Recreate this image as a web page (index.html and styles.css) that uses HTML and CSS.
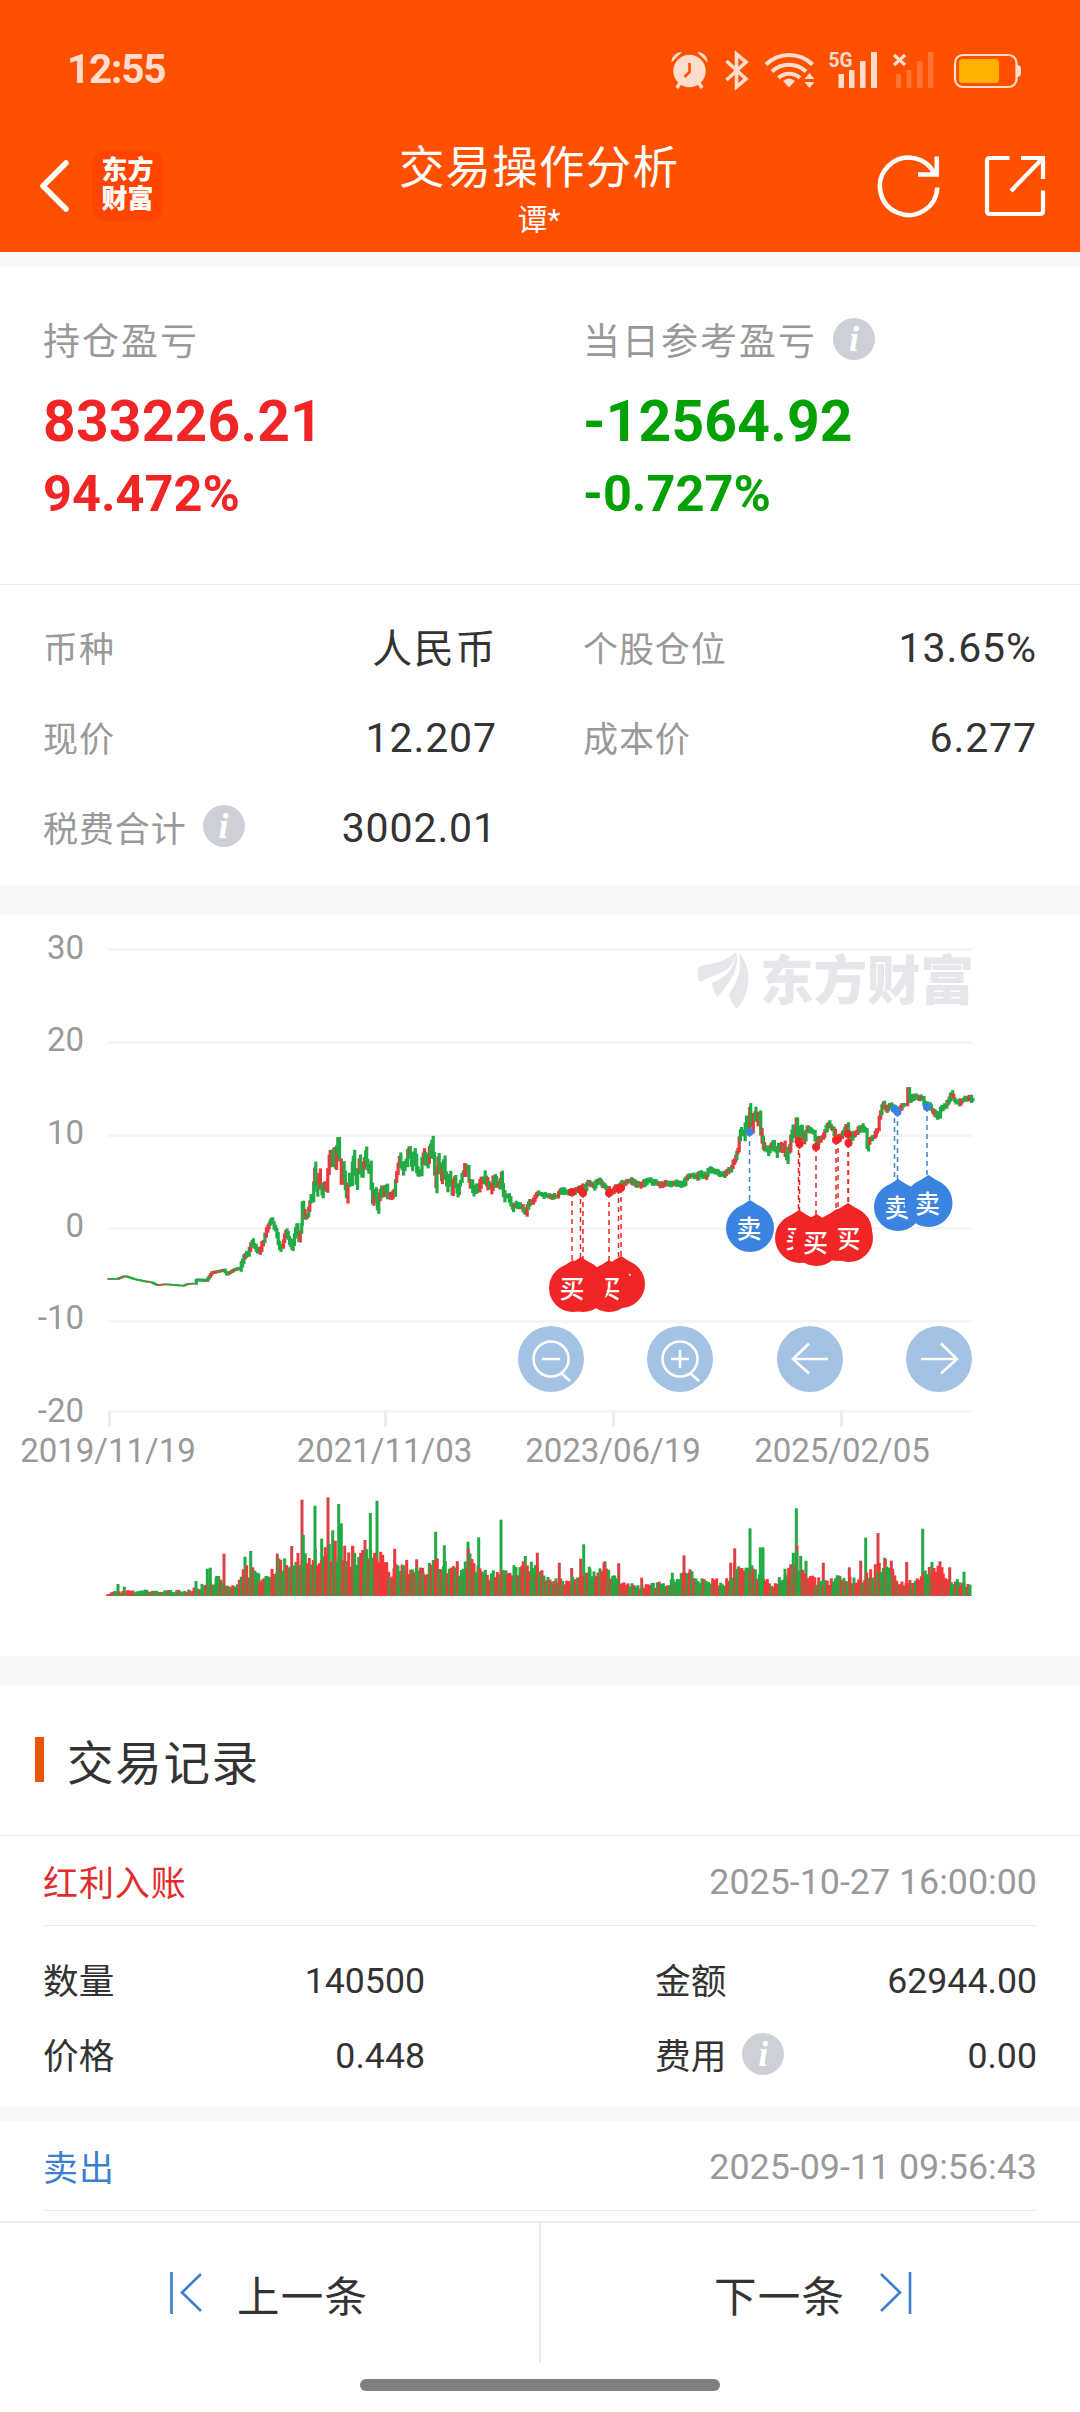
FILE: index.html
```html
<!DOCTYPE html>
<html lang="zh-CN">
<head>
    <meta charset="UTF-8">
    <meta name="viewport" content="width=device-width, initial-scale=1.0">
    <title>交易操作分析</title>
    <link rel="stylesheet" href="styles.css">
</head>
<body>
    <header class="header">
        <div class="status-bar">
            <span class="time">12:55</span>
            <svg class="status-icons" width="354" height="52" viewBox="669 44 354 52" fill="#ffdccc">
                <!-- alarm -->
                <circle cx="689.5" cy="71" r="16.2"/>
                <path d="M671.5 62.500 A10 10 0 0 1 682 52 Z M707.500 62.500 A10 10 0 0 0 697 52 Z"/>
                <path d="M680 83l-3 5M699 83l3 5" stroke="#ffdccc" stroke-width="3.500"/>
                <path d="M689.500 63v9l-5 5" fill="none" stroke="#ff5000" stroke-width="2.600"/>
                <!-- bluetooth -->
                <path d="M726.500 61L746 79l-9.500 8V54l9.500 8-19.500 18" fill="none" stroke="#ffdccc" stroke-width="3.600"/>
                <!-- wifi -->
                <g fill="none" stroke="#ffdccc" stroke-width="4">
                    <path d="M766 64.500a33 33 0 0 1 46.500 0"/>
                    <path d="M772 71.500a24.500 24.500 0 0 1 34 0"/>
                    <path d="M778.500 78a15.500 15.500 0 0 1 21.500 0"/>
                </g>
                <path d="M783 81q6-5 12 0l-6 6.500zM804.500 79l5-6 5 6zM804.500 82l5 6 5-6z"/>
                <!-- signal -->
                <text class="net" x="828.500" y="67" textLength="24" lengthAdjust="spacingAndGlyphs">5G</text>
                <path d="M838.500 74h5.500v14h-5.500zM849 70h5.500v18h-5.500zM860 61h5.500v27h-5.500zM871 52h6v36h-6z"/>
                <path d="M894 55l11 10M905 55l-11 10" stroke="#ffdccc" stroke-width="3.200"/>
                <path d="M896 74h5v14h-5zM906.500 70h5v18h-5zM917 61h5.500v27h-5.500zM928 52h5.500v36h-5.500z" fill="#ff7333"/>
                <!-- battery -->
                <rect x="955" y="55" width="61.500" height="32" rx="8" fill="none" stroke="#ffdccc" stroke-width="2.200"/>
                <rect x="959" y="59" width="40" height="24" rx="3.500" fill="#ffb000"/>
                <path d="M1017 65h1q3 1 3 3v6q0 2-3 3h-1z"/>
            </svg>
        </div>
        <div class="nav-bar">
            <div class="nav-side">
                <svg width="32" height="56" viewBox="38 159 32 56" fill="none" stroke="#fff" stroke-width="5.500" stroke-linecap="round" stroke-linejoin="round">
                    <path d="M66 164L43 187l23 23"/>
                </svg>
                <div class="logo">东方<br>财富</div>
            </div>
            <div class="nav-title">
                <div class="title">交易操作分析</div>
                <div class="subtitle">谭*</div>
            </div>
            <div class="nav-side nav-right">
                <svg width="66" height="66" viewBox="876 153 66 66" fill="none" stroke="#fff" stroke-width="4.500">
                    <path d="M937.300 187.500A28.700 28.700 0 1 1 935 175"/>
                    <path d="M936.800 156.500V174.500H918"/>
                </svg>
                <svg width="66" height="66" viewBox="982 153 66 66" fill="none" stroke="#fff" stroke-width="4.200">
                    <path d="M1009.500 158H990q-3 0-3 3v50q0 3 3 3h50q3 0 3-3v-20.500M1021 158h22v21M1043 158l-32 33"/>
                </svg>
            </div>
        </div>
    </header>

    <section class="summary">
        <div class="profit">
            <div class="profit-item red">
                <div class="profit-label">持仓盈亏</div>
                <div class="amount">833226.21</div>
                <div class="percent">94.472%</div>
            </div>
            <div class="profit-item green">
                <div class="profit-label">当日参考盈亏<span class="info">i</span></div>
                <div class="amount">-12564.92</div>
                <div class="percent">-0.727%</div>
            </div>
        </div>
        <div class="details">
            <div class="detail"><span>币种</span><b class="cn">人民币</b></div>
            <div class="detail"><span>个股仓位</span><b>13.65%</b></div>
            <div class="detail"><span>现价</span><b>12.207</b></div>
            <div class="detail"><span>成本价</span><b>6.277</b></div>
            <div class="detail"><span>税费合计<i class="info">i</i></span><b>3002.01</b></div>
        </div>
    </section>

    <section class="chart">
        <svg id="chart" width="1080" height="741" viewBox="0 915 1080 741">
            <g stroke="#f5f5f5" stroke-width="3">
                <path d="M108 949.500H972M108 1042.500H972M108 1135.500H972M108 1228.500H972M108 1321.500H972M108 1411.500H972"/>
                <path d="M109.500 1412v15M385.500 1412v15M613.500 1412v15M841.500 1412v15" stroke="#ececec"/>
            </g>
            <g class="axis" text-anchor="end">
                <text x="84" y="959">30</text>
                <text x="84" y="1051">20</text>
                <text x="84" y="1144">10</text>
                <text x="84" y="1237">0</text>
                <text x="84" y="1329">-10</text>
                <text x="84" y="1422">-20</text>
            </g>
            <g class="axis" text-anchor="middle">
                <text x="108" y="1462">2019/11/19</text>
                <text x="384.500" y="1462">2021/11/03</text>
                <text x="613" y="1462">2023/06/19</text>
                <text x="842" y="1462">2025/02/05</text>
            </g>
            <!-- watermark -->
            <g fill="#e6e6eb">
                <path d="M698 970q0-4 6-5c14-2 24-6 31-12-1 15-12 20-22 23-7 2-9 5-14 6q-2-6-1-12z"/>
                <path d="M712 983c13-5 23-13 23-30h1.500c3 17-7 30-19 44q-4-5-5.500-14z"/>
                <path d="M729 994c10-14 13-26 10-41 13 14 13 38-2 56q-7-7-8-15z"/>
                <text class="watermark" x="760" y="1000" textLength="214" lengthAdjust="spacingAndGlyphs">东方财富</text>
            </g>
            <g id="price"></g>
            <g id="volume"></g>
            <g id="marks"></g>
            <!-- chart controls -->
            <g fill="#a4c2e4">
                <circle cx="551" cy="1359" r="33"/>
                <circle cx="680" cy="1359" r="33"/>
                <circle cx="810" cy="1359" r="33"/>
                <circle cx="939" cy="1359" r="33"/>
            </g>
            <g fill="none" stroke="#fff" stroke-width="2.600">
                <circle cx="551" cy="1359" r="17.500"/>
                <path d="M542 1359h18M561 1373l9 8"/>
                <circle cx="680" cy="1359" r="17.500"/>
                <path d="M671 1359h18M680 1350v18M690 1373l9 8"/>
                <path d="M828 1359h-35M809 1343.500l-16 15.500 16 14.500"/>
                <path d="M921 1359h35M941 1343.500l16 15.500-16 14.500"/>
            </g>
        </svg>
    </section>

    <section class="records">
        <h2 class="section-title">交易记录</h2>
        <div class="record">
            <div class="record-head"><span class="red">红利入账</span><time>2025-10-27 16:00:00</time></div>
            <div class="record-body">
                <div class="cell"><span>数量</span><span>140500</span></div>
                <div class="cell"><span>金额</span><span>62944.00</span></div>
                <div class="cell"><span>价格</span><span>0.448</span></div>
                <div class="cell"><span>费用<i class="info">i</i></span><span>0.00</span></div>
            </div>
        </div>
        <div class="record">
            <div class="record-head"><span class="blue">卖出</span><time>2025-09-11 09:56:43</time></div>
            <div class="record-body"></div>
        </div>
    </section>

    <footer class="footer">
        <div class="pager">
            <div class="page-btn prev">
                <svg width="32" height="42" viewBox="0 0 32 42" fill="none" stroke="#3c7fd0" stroke-width="2.600"><path d="M1.500 0v42M31 2L12 20.500 31 39"/></svg>
                上一条
            </div>
            <div class="page-btn next">
                下一条
                <svg width="32" height="42" viewBox="0 0 32 42" fill="none" stroke="#3c7fd0" stroke-width="2.600"><path d="M30 0v42M1 2l19 18.500L1 39"/></svg>
            </div>
        </div>
        <div class="home-bar"></div>
    </footer>
    <script src="chart.js"></script>
</body>
</html>
```
FILE: styles.css
```css
* {
    box-sizing: border-box;
}

body {
    margin: 0;
    height: 2412px;
    overflow: hidden;
    display: flex;
    flex-direction: column;
    background: #f8f8f8;
    color: #333;
    font-family: Roboto, "Noto Sans CJK SC", sans-serif;
    font-size: 36px;
}

.red {
    color: #e22c2c;
}

.blue {
    color: #3c7fd0;
}

.header {
    flex: none;
    height: 252px;
    background: #ff5000;
    color: #fff;
}

.status-bar {
    height: 140px;
    padding: 0 57px 0 67px;
    display: flex;
    align-items: center;
    justify-content: space-between;
}

.time {
    color: #ffdccc;
    font-size: 40.5px;
    font-weight: 700;
    letter-spacing: -1.2px;
    padding-bottom: 2px;
}

.net {
    font-size: 21px;
    font-weight: 700;
}

.nav-bar {
    height: 112px;
    display: flex;
    justify-content: space-between;
    align-items: flex-start;
    padding: 0 32px 0 38px;
}

.nav-side {
    width: 226px;
    padding-top: 10px;
    display: flex;
    align-items: center;
    gap: 22px;
}

.nav-right {
    width: 234px;
    justify-content: flex-end;
    gap: 40px;
    padding-top: 13px;
}

.logo {
    width: 71px;
    height: 71px;
    border-radius: 14px;
    background: #ff4500;
    font-size: 26px;
    font-weight: 900;
    line-height: 29px;
    text-align: center;
    padding-top: 6px;
}

.nav-title {
    text-align: center;
}

.title {
    margin-top: 2px;
    font-size: 45.5px;
    line-height: 54px;
    letter-spacing: 1.2px;
}

.subtitle {
    font-size: 30px;
    line-height: 44px;
    margin-top: 2px;
}

.summary {
    flex: none;
    height: 618px;
    margin-top: 15px;
    background: #fff;
}

.profit {
    height: 318px;
    padding: 46px 43px 0;
    display: grid;
    grid-template-columns: 1fr 1fr;
    column-gap: 86px;
    border-bottom: 1px solid #ebebeb;
}

.profit-label {
    display: flex;
    align-items: center;
    height: 52px;
    color: #999;
    font-size: 37px;
    letter-spacing: 2px;
    white-space: nowrap;
}

.profit-item.red {
    color: #f12525;
}

.profit-item.green {
    color: #00a100;
}

.amount {
    font-size: 57px;
    font-weight: 700;
    line-height: 70px;
    margin-top: 22px;
    letter-spacing: .2px;
}

.percent {
    font-size: 50.5px;
    font-weight: 700;
    line-height: 60px;
    margin-top: 7px;
}

.info {
    display: inline-flex;
    align-items: center;
    justify-content: center;
    flex: none;
    width: 42px;
    height: 42px;
    margin-left: 16px;
    border-radius: 50%;
    background: #cdd0d6;
    color: #fff;
    font: italic bold 36px/42px "Liberation Serif", serif;
    letter-spacing: 0;
    vertical-align: middle;
}

.details {
    padding: 18px 43px 0;
    display: grid;
    grid-template-columns: 1fr 1fr;
    grid-auto-rows: 90px;
    column-gap: 86px;
}

.detail {
    display: flex;
    align-items: center;
    justify-content: space-between;
    color: #999;
    font-size: 35px;
    letter-spacing: .9px;
}

.detail span {
    display: flex;
    align-items: center;
    padding-bottom: 4px;
}

.detail b {
    font-weight: 400;
    font-size: 41px;
    color: #333;
}

.detail .cn {
    font-size: 40px;
    letter-spacing: 1.6px;
    padding-bottom: 4px;
}

.chart {
    flex: none;
    height: 741px;
    margin-top: 30px;
    background: #fff;
}

.chart svg {
    display: block;
}

.axis {
    fill: #999;
    font-size: 33px;
}

.watermark {
    font-size: 53px;
    font-weight: 900;
}

.pin-text {
    fill: #fff;
    font-size: 25px;
    font-weight: 500;
    text-anchor: middle;
}

.records {
    flex: none;
    height: 535px;
    margin-top: 30px;
    overflow: hidden;
}

.section-title {
    display: flex;
    align-items: center;
    gap: 23px;
    height: 150px;
    margin: 0;
    padding: 0 0 2px 35px;
    background: #fff;
    border-bottom: 1px solid #ececec;
    font-size: 46.5px;
    font-weight: 400;
    letter-spacing: 1.7px;
}

.section-title::before {
    content: "";
    width: 9px;
    height: 45px;
    background: #e95504;
}

.record {
    padding: 0 43px;
    background: #fff;
    margin-bottom: 15px;
}

.record-head {
    height: 90px;
    display: flex;
    align-items: center;
    justify-content: space-between;
    border-bottom: 1px solid #ececec;
    font-size: 35px;
    letter-spacing: .9px;
}

.record-head time {
    color: #999;
    font-size: 35.8px;
    letter-spacing: 0;
    padding-top: 3px;
}

.record-body {
    height: 180px;
    padding-top: 17px;
    display: grid;
    grid-template-columns: 382px 382px;
    grid-auto-rows: 75px;
    justify-content: space-between;
}

.cell {
    display: flex;
    align-items: center;
    justify-content: space-between;
    font-size: 35.7px;
}

.cell span:first-child {
    display: flex;
    align-items: center;
    padding-bottom: 4px;
}

.footer {
    flex: none;
    height: 191px;
    background: #fff;
    border-top: 2px solid #ececec;
}

.pager {
    display: grid;
    grid-template-columns: 541px 1fr;
    height: 140px;
}

.page-btn {
    display: flex;
    align-items: center;
    font-size: 42.5px;
    letter-spacing: 1.2px;
    gap: 35px;
}

.prev {
    padding-left: 170px;
    border-right: 2px solid #ececec;
}

.next {
    padding-left: 173px;
}

.home-bar {
    width: 360px;
    height: 12px;
    margin: 16px auto 0;
    border-radius: 6px;
    background: #808080;
}
```
FILE: chart.js
```js
const NS = 'http://www.w3.org/2000/svg';
const RED = '#e63a3c';
const GREEN = '#22ab44';

function add(parent, tag, attrs, text) {
    const el = document.createElementNS(NS, tag);
    for (const k in attrs) el.setAttribute(k, attrs[k]);
    if (text) el.textContent = text;
    parent.appendChild(el);
    return el;
}

// seeded random, so the small wiggles stay the same on every load
let seed = 7;
function rnd() {
    seed = (seed * 16807) % 2147483647;
    return seed / 2147483647;
}

// price samples: x, y pairs for each half of the plot
const left = [312,1033,340,1033,362,1025,395,1035,440,1043,455,1050,480,1048,530,1052,545,1047,565,1046,570,1036,600,1037,
    615,1015,630,1013,650,1008,658,1020,680,1007,697,1003,712,965,720,965,732,928,740,945,752,957,765,928,778,885,788,866,
    800,895,812,948,820,940,830,900,848,948,862,882,868,925,876,880,878,820,886,862,893,855,903,800,908,810,914,725,920,785,
    926,740,935,795,942,765,948,785,956,690,962,715,966,675,974,720,981,640,986,700,991,765,996,720,1006,803,1015,740,
    1020,755,1026,692,1034,765,1043,700,1051,745,1062,677,1068,725,1074,715,1082,820,1090,785,1096,837,1104,785,1112,800,
    1117,775,1130,805,1145,785,1152,735,1160,693,1168,725,1180,700,1188,666,1195,715,1202,680,1214,742,1222,730,1229,683,
    1240,712,1254,647,1266,775,1272,695,1282,755,1288,702,1297,770,1305,745,1313,795,1320,750,1327,790,1337,760,1342,740,
    1357,718,1362,760,1380,788,1390,770,1405,750,1425,778,1435,755,1450,775,1456,738,1462,800,1475,800,1488,835,1495,825,
    1515,830,1527,850,1535,820,1545,820,1558,795,1568,795];
const right = [0,795,20,800,50,802,58,785,75,790,95,790,120,775,128,785,140,760,155,775,170,757,195,780,205,790,230,770,
    262,757,290,772,315,757,345,768,400,765,415,770,428,745,440,742,455,748,465,738,480,748,492,725,510,735,530,742,
    552,728,565,700,575,670,582,618,592,630,600,580,604,610,609,556,615,605,624,568,630,590,637,578,645,650,660,675,
    672,655,685,675,697,668,708,665,716,697,725,660,735,605,739,635,744,585,748,635,755,610,765,640,776,608,795,625,
    803,650,820,635,838,598,850,615,862,640,875,630,892,605,900,640,920,620,935,608,945,615,950,665,958,640,970,635,
    980,615,985,580,997,540,1005,560,1015,545,1025,550,1040,560,1055,545,1063,545,1068,500,1073,530,1090,520,1100,530,
    1110,525,1115,545,1130,545,1140,565,1158,580,1163,555,1178,550,1185,535,1195,515,1205,535,1215,540,1230,530,
    1250,528,1257,532];

const points = [];
function load(list, offset) {
    for (let i = 0; i < list.length; i += 2) {
        points.push([offset + list[i] / 2.904, 910 + list[i + 1] / 2.8]);
    }
}
load(left, 0);
load(right, 540);

// each step is one candle: a short upright bar that spans the day's range
const price = document.getElementById('price');
let prev = points[0];
for (let i = 1; i < points.length; i++) {
    const a = points[i - 1];
    const b = points[i];
    const steps = Math.max(1, Math.round((b[0] - a[0]) / 1.3));
    for (let s = 1; s <= steps; s++) {
        const x = a[0] + (b[0] - a[0]) * s / steps;
        const wild = x < 240 ? 0.3 : (x > 315 && x < 505) || (x > 745 && x < 810) ? 6 : 2.5;
        const y = a[1] + (b[1] - a[1]) * s / steps;
        const red = rnd() < (y < prev[1] ? 0.45 : 0.1);
        const half = x < 195 ? 0.6 : x < 240 ? 1.2 : 1.5;
        const top = Math.min(prev[1], y) - half - (s < steps ? rnd() * wild : 0);
        const bottom = Math.max(prev[1], y) + half + (s < steps ? rnd() * wild : 0);
        add(price, 'rect', {
            x: (x - 1.6).toFixed(1), y: top.toFixed(1),
            width: 3.2, height: (bottom - top).toFixed(1),
            fill: red ? RED : GREEN
        });
        prev = [x, y];
    }
}

// volume: usual level along the axis, then the single high bars
const level = [52,4,75,12,200,15,300,15,330,25,380,50,430,25,470,75,510,55,560,85,600,90,640,105,700,120,740,125,800,110,
    860,115,900,65,950,90,1000,70,1030,105,1060,100,1090,70,1140,100,1180,60,1230,60,1300,80,1350,75,1400,38,1450,48,
    1500,75,1550,75,1590,35,1650,25,1690,30,1750,45,1800,60,1850,40,1910,40,1950,95,1990,75,2050,35,2090,60,2120,110,
    2150,60,2200,35,2250,50,2300,45,2350,70,2390,90,2430,40,2470,35,2520,75,2560,65,2610,35,2645,25];
const spikes = '84g36 103g28 318g45 352g82 361g85 402r127 465g118 482g135 562r127 605r150 636r289 640g183 675g271 695g172 ' +
    '714r296 728g197 746g276 754g218 788r150 825r168 841g249 861g286 914r142 980r110 1037g193 1063g152 1134g163 1166g176 ' +
    '1135r142 1233g229 1306g120 1342r130 1408r100 1445r84 1472r112 1481g155 1545g104 1586r98 1655r55 1747g70 1782r122 ' +
    '1800r80 1922r100 1934r143 1980g203 2011g146 2019g146 2085g82 2110g130 2119g263 2121r152 2148g106 2200r100 2278r86 ' +
    '2312r106 2327g175 2364r189 2384g115 2404r106 2450r102 2498g202 2526g102 2550r104 2579r86 2622g73';

const volume = document.getElementById('volume');
function bar(x, h, color, opacity) {
    add(volume, 'rect', {
        x: (90 + x / 3 - 1.5).toFixed(1), y: (1596 - h / 3).toFixed(1),
        width: 3, height: (h / 3).toFixed(1), fill: color, opacity: opacity
    });
}
spikes.split(' ').forEach(s => {
    const m = s.match(/(\d+)([rg])(\d+)/);
    bar(+m[1], +m[3], m[2] === 'r' ? '#da4146' : GREEN, 1);
});
for (let i = 2; i < level.length; i += 2) {
    for (let x = level[i - 2]; x < level[i]; x += 6) {
        const t = (x - level[i - 2]) / (level[i] - level[i - 2]);
        const h = level[i - 1] + (level[i + 1] - level[i - 1]) * t;
        bar(x, h * (0.75 + rnd() * 0.6), rnd() < 0.5 ? '#f5373b' : GREEN, 1);
        if (rnd() < 0.7) bar(x + 3, h * (0.4 + rnd() * 0.45), '#75793f', 0.7);
    }
}

// trade marks: dots on the line, dashed leader and the pin
const marks = document.getElementById('marks');
const BUY = '#f12525';
const SELL = '#3a83e0';
const dots = [
    [572, 1192, 1262, BUY], [580.5, 1190, 1260, BUY], [583, 1193, 1260, BUY], [609, 1193, 1262, BUY],
    [618.5, 1189, 1258, BUY], [621, 1188, 1258, BUY],
    [749.5, 1132, 1202, SELL],
    [798.500, 1141, 1212, BUY], [799.5, 1144, 1212, BUY], [816, 1147, 1218, BUY], [836, 1140, 1210, BUY],
    [838, 1139, 1210, BUY], [848, 1134, 1205, BUY], [848.5, 1143, 1205, BUY],
    [894.5, 1109, 1180, SELL], [897.500, 1112, 1180, SELL], [927, 1107, 1178, SELL]
];
dots.forEach(([x, y, end, color]) => {
    add(marks, 'path', { d: `M${x} ${y}V${end}`, stroke: color, 'stroke-width': 1.5, 'stroke-dasharray': '5 4' });
    add(marks, 'circle', { cx: x, cy: y, r: 4, fill: color });
});

const pins = [
    [621, 1284, '买', BUY], [609, 1288, '买', BUY], [583, 1288, '', BUY], [581, 1285, '', BUY], [573, 1288, '买', BUY],
    [750, 1228, '卖', SELL],
    [800, 1239, '', BUY], [799, 1238, '买', BUY], [837, 1237, '', BUY], [848, 1231, '', BUY],
    [849, 1238, '买', BUY], [816.5, 1242, '买', BUY],
    [898, 1207, '卖', SELL], [928.5, 1203, '卖', SELL]
];
pins.forEach(([x, y, label, color]) => {
    add(marks, 'path', { d: `M${x - 14} ${y - 19}L${x} ${y - 28}L${x + 14} ${y - 19}Z`, fill: color });
    add(marks, 'circle', { cx: x, cy: y, r: 24, fill: color });
    if (label) add(marks, 'text', { x: x - 1, y: y + 10, class: 'pin-text' }, label);
});
```
